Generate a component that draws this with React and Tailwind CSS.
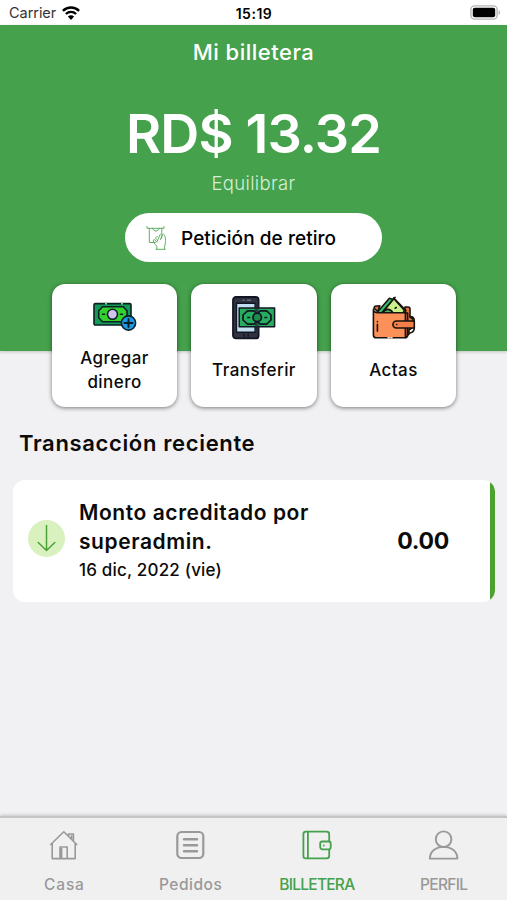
import React, { useState } from 'react';

const WifiIcon = () => (
    <svg width="18" height="14" viewBox="0 0 18 14" fill="none" stroke="#000" strokeWidth="2.4">
        <path d="M.9 4.9a11.5 11.5 0 0 1 16.2 0" />
        <path d="M3.9 8a7.2 7.2 0 0 1 10.2 0" />
        <path d="M9 14 5.9 10.6a4.5 4.5 0 0 1 6.2 0Z" fill="#000" stroke="none" />
    </svg>
);

const BatteryIcon = () => (
    <svg width="31" height="15" viewBox="0 0 31 15">
        <rect x=".9" y=".9" width="26.2" height="13.2" rx="3.6" fill="#fff" stroke="#b5b5b5" strokeWidth="1.4" />
        <rect x="2.8" y="2.8" width="22.4" height="9.4" rx="2" fill="#000" />
        <path d="M28.7 5.2c1.6.6 1.6 4 0 4.6Z" fill="#a5a5a5" />
    </svg>
);

const WithdrawIcon = () => (
    <svg width="22" height="26" viewBox="0 0 22 26" fill="none" stroke="#4fa655" strokeWidth=".9" strokeLinecap="round" strokeLinejoin="round">
        <path d="M1 1.5v1.8h17V1.5M3.3 3.3v14.2h6M15.8 3.3v5.2" />
        <path d="M6.4 3.3c0 1 1 1.7 2 1.7 0 1.5 3 1.5 3 0 1 0 2-.7 2-1.7" />
        <path d="M10 24.3h9.2M10.8 24v-2.8c-2-2-3-3.4-3.4-5.2-.4-1.4 1-1.8 1.8-.8l1.6 2 3.3-7.6c.6-1.3 2.4-.6 1.9.8l-1.2 3.8" />
        <path d="M14.8 14.2c1.6-2.6 1.4-5 2.2-5 2 0 2.6 4 2.6 7.2 0 2-.8 3.2-1 4.8V24M11.4 11.5c-1.8.3-2.3 1.8-1.3 3" />
    </svg>
);

const AddMoneyIcon = () => (
    <svg width="44" height="44" viewBox="0 0 44 44" stroke="#0b1f24" strokeWidth="1.6" strokeLinejoin="round">
        <rect x="1" y="7.6" width="37" height="21.4" rx="1.3" fill="#129b58" />
        <path d="M9.5 10.8h20.8l3.7 4v7l-3.7 4H9.5l-3.8-4v-7Z" fill="#32d12d" />
        <circle cx="19.5" cy="18.3" r="5" fill="#cfc5ed" />
        <path d="M9.5 18.3h2M27.5 18.3h2" strokeLinecap="round" />
        <path d="M12 7.6h2M28 7.6h2" stroke="#6fe07d" />
        <circle cx="35.5" cy="27" r="7.1" fill="#1b9be5" />
        <path d="M31.5 27h8M35.5 23v8" fill="none" strokeWidth="2" strokeLinecap="round" />
    </svg>
);

const TransferIcon = () => (
    <svg width="44" height="44" viewBox="0 0 44 44" stroke="#101623" strokeLinejoin="round">
        <rect x="1" y="1" width="25.6" height="41.4" rx="3" fill="#30323f" strokeWidth="1.8" />
        <rect x="4.5" y="7.2" width="18.6" height="29" fill="#c3def0" strokeWidth="1.4" />
        <rect x="7.2" y="12" width="35.4" height="18.8" fill="#25ae5d" strokeWidth="1.5" />
        <path d="M15.5 14.8h6.6l3 3 3-3h6.6l4.3 4.2v5l-4.3 4.2h-6.6l-3-3-3 3h-6.6L11 24v-5Z" fill="#25ae5d" strokeWidth="1.7" />
        <path d="M23 8v28h3.6V8Z" fill="#252836" stroke="none" opacity=".75" />
        <circle cx="25.2" cy="21.4" r="4.2" fill="#1f8c4f" strokeWidth="1.8" />
        <path d="M15.2 21.4h3M32.3 21.4h3" fill="none" strokeWidth="1.5" />
        <path d="M10.5 4.2h2M15 4.2h4" fill="none" stroke="#7e8494" strokeWidth="1" />
        <path d="M12 37.5v3.7M16.2 37.5v3.7" fill="none" strokeWidth="1.2" />
    </svg>
);

const WalletMoneyIcon = () => (
    <svg width="44" height="44" viewBox="0 0 44 44" stroke="#17130f" strokeWidth="1.6" strokeLinejoin="round" strokeLinecap="round">
        <path d="M33 11h3q2 0 2 2v8l3 2v8l-4 3v4l-4 3Z" fill="#e77643" />
        <path d="m2 12 .8-1.8 5-.4-2 6Z" fill="#e77643" />
        <path d="M10 17 22 2.3l12 12.2-2 3Z" fill="#c9f08a" />
        <path d="m4.8 16.8 12.6-14.5 3.6 1.3-11.8 14Z" fill="#32bd6b" />
        <path d="m21.5 2.3 10.8 12-1.3 3" fill="none" />
        <path d="M11 17c2-4.5 7-5 9.8-.4Z" fill="#4bb267" />
        <path d="m23.2 12.2 1.1-.7M22 2l1.1-.6" fill="none" />
        <path d="M1.4 13.3c.2 2.3 1.8 3.5 4.6 3.5h27q2.3 0 2.3 2.3v20.3q0 2.3-2.3 2.3H4.2q-2.8 0-2.8-2.8Z" fill="#fb9159" />
        <path d="M33.4 17h2.2v23l-2.2 1.5Z" fill="#e77643" />
        <path d="M24.4 25h17.9v7H24.4a3.5 3.5 0 0 1 0-7Z" fill="#f57f49" />
        <path d="M38 20.5c3 0 4.3 1.8 4.3 4.5M38 37c3-.7 4.3-2.3 4.3-5M24.6 28.5h.2M5.4 25.5v.2M5.4 28.3v7" fill="none" />
        <path d="M16 41.7h1.5M19 41.7h1" stroke="#fbd4bd" />
    </svg>
);

const HomeIcon = () => (
    <svg width="30" height="30" viewBox="0 0 30 30" fill="none" stroke="currentColor" strokeWidth="1.6" strokeLinejoin="round">
        <path d="M2.2 15 15.8 1.8 29.2 15M4.2 13.6v15h23v-15M12 28.5V17h7.2v11.5M13.6 28.5V18M20.6 6.2V4h4.8v7M23.5 5.3v4.2" />
    </svg>
);

const OrdersIcon = () => (
    <svg width="30" height="30" viewBox="0 0 30 30" fill="none" stroke="currentColor">
        <rect x="2.3" y="2" width="26" height="26" rx="4.2" strokeWidth="2.2" />
        <path d="M9 9.3h13M9 15.3h13M9 21.3h13" strokeWidth="2.4" strokeLinecap="round" />
    </svg>
);

const WalletIcon = () => (
    <svg width="30" height="30" viewBox="0 0 30 30" fill="none" stroke="currentColor" strokeWidth="1.8" strokeLinejoin="round">
        <path d="M27.2 11.5V4.2q0-2.6-2.6-2.6H3.8q-2.4 0-2.4 2.4v22q0 2.4 2.4 2.4h20.8q2.6 0 2.6-2.6v-6.5" />
        <path d="M5.9 1.6v26.8" />
        <path d="M20.2 11.5h6.6q1.9 0 1.9 1.9v3.8q0 2.1-2.1 2.1h-6.4q-2-.5-2-2.1v-3.6q0-2.1 2-2.1Z" />
        <path d="M21.1 15.5h1.4" />
    </svg>
);

const ProfileIcon = () => (
    <svg width="30" height="30" viewBox="0 0 30 30" fill="none" stroke="currentColor" strokeWidth="1.9" strokeLinejoin="round">
        <circle cx="14.6" cy="9.2" r="7.8" />
        <path d="M.9 28.6C.9 21.4 6.8 16.9 14.6 16.9S28.4 21.4 28.4 28.6Z" />
    </svg>
);

const actions = [
    { id: 'add', icon: AddMoneyIcon, lines: ['Agregar', 'dinero'] },
    { id: 'transfer', icon: TransferIcon, lines: ['Transferir'] },
    { id: 'records', icon: WalletMoneyIcon, lines: ['Actas'] }
];

const tabs = [
    { id: 'home', icon: HomeIcon, label: 'Casa', spacing: 'tracking-[0.9px] pl-[2px]' },
    { id: 'orders', icon: OrdersIcon, label: 'Pedidos', spacing: 'tracking-[0.5px] pl-[1px]' },
    { id: 'wallet', icon: WalletIcon, label: 'BILLETERA', spacing: 'tracking-[-0.75px]' },
    { id: 'profile', icon: ProfileIcon, label: 'PERFIL', spacing: 'tracking-[-0.7px]' }
];

function StatusBar() {
    return (
        <div className="h-[25px] bg-white grid grid-cols-3 items-center pl-[9px] pr-[6px] text-black">
            <div className="flex items-center gap-[6px] pt-[1px]">
                <span className="text-[14.5px] leading-none text-[#333] tracking-[-0.05px] pt-[1px]">Carrier</span>
                <WifiIcon />
            </div>
            <span className="text-center text-[14px] leading-none font-semibold pt-[3px] pr-[2px] tracking-[0.5px]">15:19</span>
            <div className="flex justify-end">
                <BatteryIcon />
            </div>
        </div>
    );
}

function ActionCard({ icon: Icon, lines }) {
    return (
        <button className="w-[125.5px] h-[123px] bg-white rounded-[13px] shadow-[0_1px_4px_rgba(0,0,0,0.5)] flex flex-col items-center pt-[12px]">
            <Icon />
            <span className="flex-1 flex flex-col justify-center pb-[8px] text-[17px] leading-[24px] font-medium tracking-[0.45px]">
                {lines.map(line => (
                    <span key={line}>{line}</span>
                ))}
            </span>
        </button>
    );
}

function Transaction() {
    return (
        <div className="mx-[13px] w-[482px] h-[122px] bg-white rounded-[12px] overflow-hidden flex">
            <div className="flex-1 flex items-center pl-[15px] pr-[41px]">
                <div className="size-[37px] rounded-full bg-[#d8f1bf] flex items-center justify-center mb-[6px]">
                    <svg width="20" height="28" viewBox="0 0 20 28" fill="none" stroke="#4da13a" strokeWidth="1.5" strokeLinecap="round">
                        <path d="M9.5 1.5v25M1.2 18.5l8.3 8 8.3-8" />
                    </svg>
                </div>
                <div className="ml-[14px] flex-1">
                    <p className="text-[21px] leading-[29px] font-semibold tracking-[0.57px] whitespace-nowrap">
                        Monto acreditado por<br />superadmin.
                    </p>
                    <p className="text-[17px] leading-[29px] font-medium tracking-[0.18px] whitespace-nowrap">16 dic, 2022 (vie)</p>
                </div>
                <span className="text-[23px] leading-none font-bold tracking-[-0.3px]">0.00</span>
            </div>
            <div className="w-[5px] bg-[#4da12e]" />
        </div>
    );
}

function App() {
    const [active, setActive] = useState('wallet');

    return (
        <div className="w-[507px] h-[900px] overflow-hidden bg-[#f1f1f4] text-[#0b0b0b] flex flex-col font-['Inter',sans-serif]">
            <StatusBar />

            <header className="h-[326px] shrink-0 bg-[#45a14b] text-white flex flex-col items-center shadow-[0_1px_3px_rgba(0,0,0,0.2)]">
                <h1 className="mt-[12px] text-[22px] leading-[30px] font-medium tracking-[0.5px]">Mi billetera</h1>
                <p className="mt-[37px] h-[60px] text-[54px] leading-[60px] font-semibold tracking-[-0.85px] whitespace-nowrap">RD$ 13.32</p>
                <p className="mt-[7px] text-[18.5px] leading-[24px] font-light tracking-[0.35px] text-[#d5efd6]">Equilibrar</p>
                <button className="mt-[18px] w-[257px] h-[49px] shrink-0 rounded-full bg-white text-black flex items-center pl-[21px] gap-[13px]">
                    <WithdrawIcon />
                    <span className="pt-[2px] text-[19px] leading-none font-medium tracking-[0.06px] whitespace-nowrap">Petición de retiro</span>
                </button>
                <div className="mt-[22px] ml-[1px] flex gap-[14px] text-[#0b0b0b]">
                    {actions.map(action => (
                        <ActionCard key={action.id} icon={action.icon} lines={action.lines} />
                    ))}
                </div>
            </header>

            <main className="flex-1 pt-[77px]">
                <h2 className="pl-[19px] mb-[22px] text-[22px] leading-[30px] font-semibold tracking-[0.65px]">Transacción reciente</h2>
                <Transaction />
            </main>

            <nav className="h-[84px] shrink-0 grid grid-cols-4 bg-[#f0f0f0] border-t-2 border-[#c5c5c6] shadow-[0_-1px_3px_rgba(0,0,0,0.18)]">
                {tabs.map(({ id, icon: Icon, label, spacing }) => (
                    <button
                        key={id}
                        onClick={() => setActive(id)}
                        className={`flex flex-col items-center pt-[12px] ${active === id ? 'text-[#45a14b]' : 'text-[#999]'}`}
                    >
                        <Icon />
                        <span className={`mt-[15px] text-[15.5px] leading-[20px] font-medium ${spacing}`}>{label}</span>
                    </button>
                ))}
            </nav>
        </div>
    );
}

export default App;
